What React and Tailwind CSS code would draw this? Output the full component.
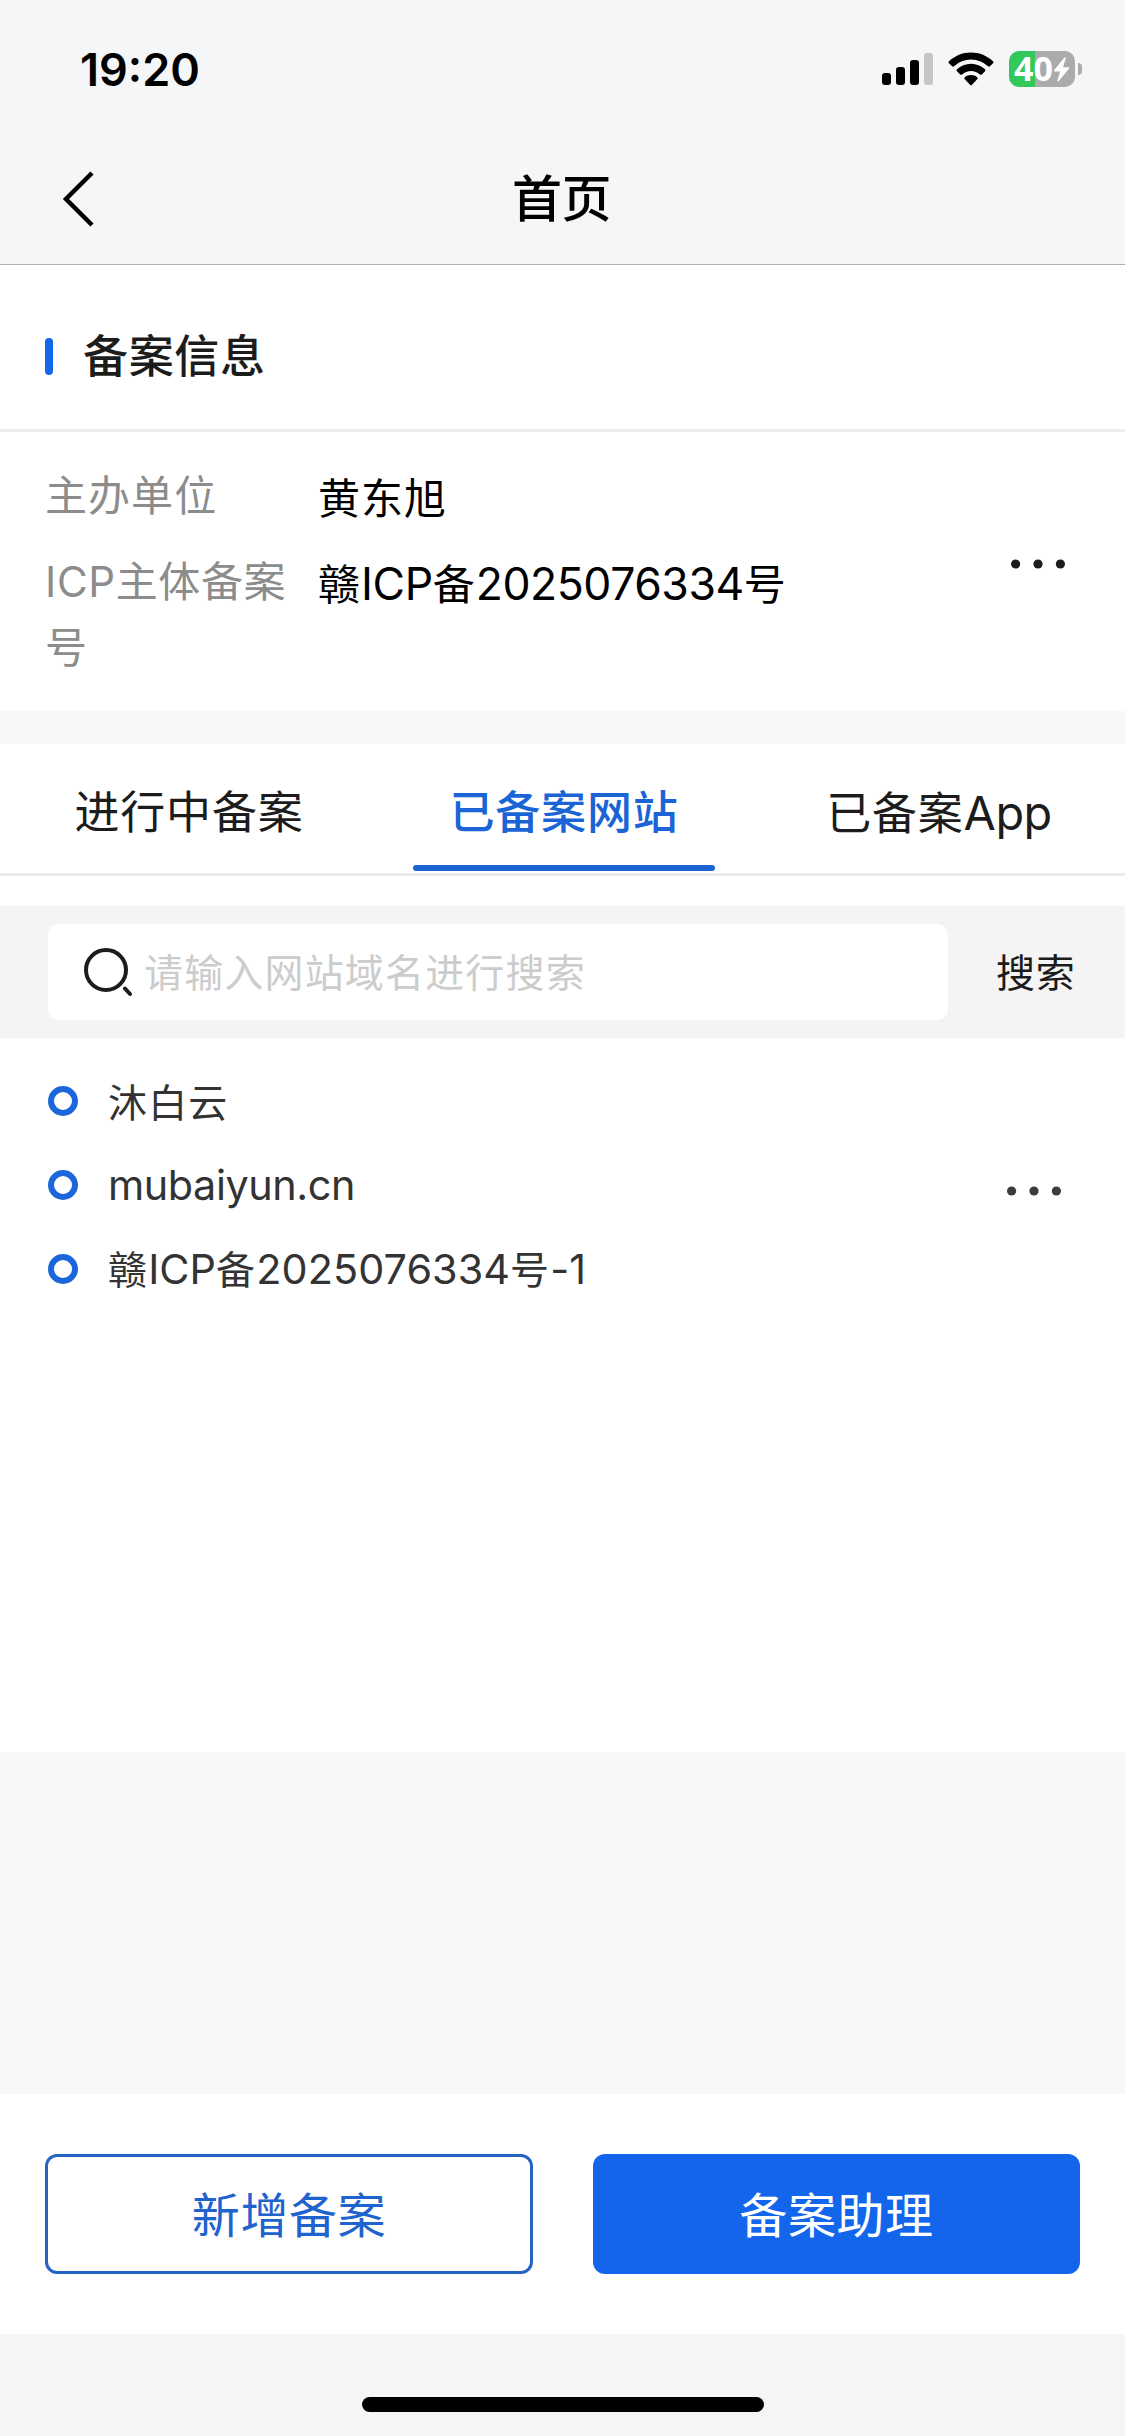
import React, { useState } from 'react'

const TABS = [
  { id: 'pending', label: '进行中备案' },
  { id: 'sites', label: '已备案网站' },
  { id: 'apps', label: '已备案App' },
]

const RECORD_LINES = [
  { text: '沐白云' },
  { text: 'mubaiyun.cn', latin: 'text-[1.06em] tracking-[-0.01em]' },
  { text: '赣ICP备2025076334号-1', latin: 'text-[1.06em] tracking-[0.002em]' },
]

export default function App() {
  const [activeTab, setActiveTab] = useState('sites')

  return (
    <div className="flex h-[2436px] w-[1125px] flex-col overflow-hidden bg-[#f7f7f7] font-['Inter','Noto_Sans_CJK_SC',sans-serif] text-[#1c1c1c]">
      <header className="flex h-[265px] shrink-0 flex-col border-b border-[#b0b1b3] bg-[#f4f6f8] text-black">
        <StatusBar />
        <NavBar title="首页" />
      </header>

      <SubjectInfo />

      <section className="mt-[33px] flex h-[1008px] shrink-0 flex-col bg-white">
        <Tabs active={activeTab} onChange={setActiveTab} />
        <SearchBar />
        <SiteRecord />
      </section>

      <footer className="mt-auto shrink-0">
        <div className="flex h-[240px] items-center justify-between bg-white px-[45px]">
          <button className="h-[120px] w-[488px] rounded-[12px] border-[3px] border-[#2464c4] pt-[4px] text-[48px] leading-none tracking-[0.012em] text-[#1f63cf]">
            新增备案
          </button>
          <button className="h-[120px] w-[487px] rounded-[12px] bg-[#1366ec] pt-[4px] text-[48px] leading-none tracking-[0.012em] text-white">
            备案助理
          </button>
        </div>
        <div className="flex h-[102px] justify-center bg-[#f4f5f7] pt-[63px]">
          <div className="h-[15px] w-[402px] rounded-full bg-black" />
        </div>
      </footer>
    </div>
  )
}

// Latin runs are set slightly larger so that they balance the Chinese glyphs
function MixedText({ children, latin = 'text-[1.06em] tracking-[-0.01em]' }) {
  return children.split(/([\w.-]+)/).map((part, i) =>
    i % 2 === 1 ? (
      <span key={i} className={latin}>{part}</span>
    ) : (
      part
    )
  )
}

function StatusBar() {
  return (
    <div className="flex h-[138px] items-center justify-between pr-[43px] pl-[80px]">
      <span className="text-[45px] leading-none font-semibold">19:20</span>
      <div className="flex items-center">
        <svg width="51" height="32" viewBox="0 0 51 32" className="mr-[15px]">
          <rect x="0" y="20" width="9" height="12" rx="3" />
          <rect x="14" y="14" width="9" height="18" rx="3" />
          <rect x="28" y="7" width="9" height="25" rx="3" />
          <rect x="42" y="0" width="9" height="32" rx="3" fill="#c5c6c8" />
        </svg>
        <svg width="46" height="34" viewBox="0 0 46 34" className="mr-[15px]">
          <path d="M23 0.5C31.6 0.5 39.3 3.9 45 9.3a1.4 1.4 0 0 1 0 2L41.900 14.300a1.400 1.400 0 0 1-1.900 0A25 25 0 0 0 23 7.500 25 25 0 0 0 6 14.300a1.400 1.400 0 0 1-1.900 0L1 11.300a1.400 1.400 0 0 1 0-2C6.700 3.900 14.400 0.500 23 0.500z" />
          <path d="M23 11.800c5.400 0 10.300 2.100 14 5.500a1.400 1.400 0 0 1 0 2l-3.200 3.100a1.400 1.400 0 0 1-1.900 0A13.300 13.300 0 0 0 23 18.900a13.300 13.300 0 0 0-8.900 3.500 1.400 1.400 0 0 1-1.900 0L9 19.300a1.400 1.400 0 0 1 0-2c3.700-3.400 8.600-5.500 14-5.500z" />
          <path d="M23 23c2.500 0 4.600.9 6.200 2.300a1.400 1.400 0 0 1 0 2L24 32.700a1.400 1.400 0 0 1-2 0l-5.200-5.400a1.400 1.400 0 0 1 0-2C18.400 23.900 20.500 23 23 23z" />
        </svg>
        <div className="flex h-[36px] w-[66px] items-center justify-center rounded-[10px] bg-linear-to-r from-[#34c759] from-40% to-[#ababad] to-40% text-white">
          <span className="pb-[3px] font-['Open_Sans'] text-[34px] leading-none font-bold">40</span>
          <svg width="17" height="25" viewBox="0 0 17 25" fill="currentColor">
            <path d="M11.500 0.500 1 13.200c-.5.700-.2 1.300.5 1.300h5.700L4.400 23.600c-.2.900.6 1.300 1.200.6L16.200 11.500c.5-.6.200-1.200-.5-1.200h-5.600l2.600-9.100c.3-.9-.6-1.300-1.200-.7z" />
          </svg>
        </div>
        <div className="ml-[3px] h-[12px] w-[4px] rounded-r-full bg-[#ababad]" />
      </div>
    </div>
  )
}

function NavBar({ title }) {
  return (
    <div className="grid flex-1 grid-cols-3 items-center px-[62px] pb-[4px]">
      <svg width="34" height="56" viewBox="0 0 34 56" fill="none" stroke="currentColor" strokeWidth="4.5">
        <path d="M30 2 4 28l26 26" />
      </svg>
      <h1 className="pr-[2px] text-center text-[50px] leading-none font-medium tracking-[-0.01em]">{title}</h1>
    </div>
  )
}

function SubjectInfo() {
  return (
    <section className="flex h-[446px] shrink-0 flex-col bg-white">
      <div className="flex h-[167px] items-center border-b-[3px] border-[#eeeeee] pt-[18px] pl-[45px]">
        <span className="h-[37px] w-[8px] rounded-full bg-[#1467e8]" />
        <h2 className="ml-[30px] text-[45px] leading-none font-medium tracking-[0.015em]">备案信息</h2>
      </div>
      <div className="flex px-[45px] pt-[31px]">
        <dl className="grid grid-cols-[273px_auto] gap-y-[20px] text-[42px] leading-[66px] tracking-[0.025em]">
          <dt className="text-[#8c8c8c]">主办单位</dt>
          <dd className="h-[66px] pt-[3px] text-black">黄东旭</dd>
          <dt className="w-[250px] tracking-[0.015em] text-[#8c8c8c]">ICP主体备案号</dt>
          <dd className="pt-[2px] text-black">
            <MixedText>赣ICP备2025076334号</MixedText>
          </dd>
        </dl>
        <div className="mt-[96px] mr-[15px] ml-auto">
          <MoreDots className="text-[#1c1c1c]" />
        </div>
      </div>
    </section>
  )
}

function Tabs({ active, onChange }) {
  return (
    <nav className="flex h-[132px] shrink-0 justify-between border-b-[3px] border-[#ebebeb] pr-[35px] pl-[38px]">
      {TABS.map((tab) => {
        const isActive = tab.id === active
        return (
          <button
            key={tab.id}
            onClick={() => onChange(tab.id)}
            className={`flex w-[302px] flex-col items-center justify-between pt-[36px] pb-[2px] text-[45px] leading-[66px] tracking-[0.018em] ${
              isActive ? 'font-medium text-[#1a64d6]' : 'text-[#1c1c1c]'
            }`}
          >
            <span>
              <MixedText latin="text-[1.04em] tracking-[-0.01em]">{tab.label}</MixedText>
            </span>
            {isActive && <span className="h-[6px] w-full rounded-full bg-[#1c64d2]" />}
          </button>
        )
      })}
    </nav>
  )
}

function SearchBar() {
  return (
    <div className="mt-[30px] flex h-[132px] shrink-0 items-center bg-[#f4f4f4] pl-[48px]">
      <div className="flex h-[96px] w-[900px] items-center rounded-[10px] bg-white pl-[36px]">
        <svg width="48" height="49" viewBox="0 0 48 49" fill="none" stroke="#1c1c1c" strokeWidth="4">
          <circle cx="22" cy="22" r="20" />
          <path d="m41 40.500 5 5.500" strokeLinecap="round" />
        </svg>
        <span className="ml-[12px] pt-[1px] text-[39px] leading-none tracking-[0.03em] text-[#cccccc]">
          请输入网站域名进行搜索
        </span>
      </div>
      <button className="ml-[48px] pt-[1px] text-[39px] leading-none tracking-[0.02em]">搜索</button>
    </div>
  )
}

function SiteRecord() {
  return (
    <div className="flex items-center pt-[21px] pr-[64px] pl-[48px] text-[#333333]">
      <ul className="flex flex-col">
        {RECORD_LINES.map(({ text, latin }) => (
          <li key={text} className="flex h-[84px] items-center gap-[30px]">
            <span className="size-[30px] rounded-full border-[6px] border-[#1c66dc]" />
            <span className="pt-[2px] text-[39px] leading-none tracking-[0.03em]">
              <MixedText latin={latin}>{text}</MixedText>
            </span>
          </li>
        ))}
      </ul>
      <div className="mt-[12px] ml-auto">
        <MoreDots className="text-[#3c3c3c]" />
      </div>
    </div>
  )
}

function MoreDots({ className }) {
  return (
    <svg width="54" height="10" viewBox="0 0 54 10" fill="currentColor" className={className}>
      <circle cx="4.600" cy="5" r="4.600" />
      <circle cx="27" cy="5" r="4.600" />
      <circle cx="49.400" cy="5" r="4.600" />
    </svg>
  )
}
